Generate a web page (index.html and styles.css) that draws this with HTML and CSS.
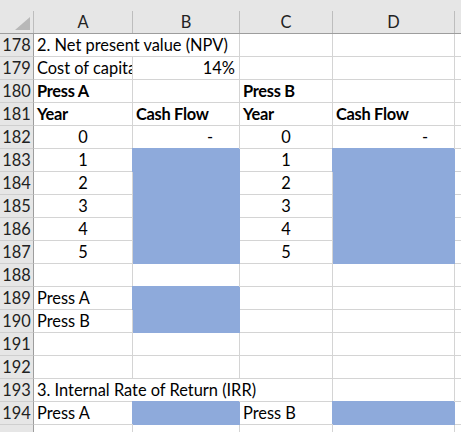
FILE: index.html
```html
<!DOCTYPE html>
<html>
<head>
<meta charset="utf-8">
<link rel="stylesheet" href="styles.css">
</head>
<body>
<div class="sheet">
  <div class="corner"><div class="hl"><svg class="tri" width="33" height="22" viewBox="0 0 33 22"><polygon points="15,19 30,19 30,6" fill="#b8b8b8"/></svg></div></div>
  <div class="hdr"><div class="hl">A</div></div>
  <div class="hdr"><div class="hl">B</div></div>
  <div class="hdr"><div class="hl">C</div></div>
  <div class="hdr"><div class="hl">D</div></div>
  <div class="hdr"><div class="hl last"></div></div>

  <div class="rh">178</div><div class="c span2">2. Net present value (NPV)</div><div class="c"></div><div class="c"></div><div class="c e"></div>
  <div class="rh">179</div><div class="c clip">Cost of capital</div><div class="c r">14%</div><div class="c"></div><div class="c"></div><div class="c e"></div>
  <div class="rh">180</div><div class="c b">Press A</div><div class="c"></div><div class="c b">Press B</div><div class="c"></div><div class="c e"></div>
  <div class="rh">181</div><div class="c b">Year</div><div class="c b">Cash Flow</div><div class="c b">Year</div><div class="c b">Cash Flow</div><div class="c e"></div>
  <div class="rh">182</div><div class="c m">0</div><div class="c dash">-</div><div class="c m">0</div><div class="c dash">-</div><div class="c e"></div>
  <div class="rh">183</div><div class="c m">1</div><div class="c fill rows5"></div><div class="c m">1</div><div class="c fill rows5"></div><div class="c e"></div>
  <div class="rh">184</div><div class="c m">2</div><div class="c m">2</div><div class="c e"></div>
  <div class="rh">185</div><div class="c m">3</div><div class="c m">3</div><div class="c e"></div>
  <div class="rh">186</div><div class="c m">4</div><div class="c m">4</div><div class="c e"></div>
  <div class="rh">187</div><div class="c m">5</div><div class="c m">5</div><div class="c e"></div>
  <div class="rh">188</div><div class="c"></div><div class="c"></div><div class="c"></div><div class="c"></div><div class="c e"></div>
  <div class="rh">189</div><div class="c">Press A</div><div class="c fill rows2"></div><div class="c"></div><div class="c"></div><div class="c e"></div>
  <div class="rh">190</div><div class="c">Press B</div><div class="c"></div><div class="c"></div><div class="c e"></div>
  <div class="rh">191</div><div class="c"></div><div class="c"></div><div class="c"></div><div class="c"></div><div class="c e"></div>
  <div class="rh">192</div><div class="c"></div><div class="c"></div><div class="c"></div><div class="c"></div><div class="c e"></div>
  <div class="rh">193</div><div class="c span3">3. Internal Rate of Return (IRR)</div><div class="c"></div><div class="c e"></div>
  <div class="rh">194</div><div class="c">Press A</div><div class="c fill"></div><div class="c">Press B</div><div class="c fill"></div><div class="c e"></div>
  <div class="rh"></div><div class="c"></div><div class="c"></div><div class="c"></div><div class="c"></div><div class="c e"></div>
</div>
</body>
</html>
```
FILE: styles.css
```css
html, body {
  margin: 0;
  padding: 0;
  background: #ffffff;
  overflow: hidden;
}
.sheet {
  width: 461px;
  height: 432px;
  overflow: hidden;
  display: grid;
  grid-template-columns: 34px 99px 107px 93px 122px 1fr;
  grid-auto-rows: 23px;
  grid-template-rows: 34px;
  font-family: Lato, "Liberation Sans", sans-serif;
  font-size: 16.4px;
  color: #000;
}
.corner, .hdr {
  background: #e6e6e6;
  border-bottom: 1px solid #9d9d9d;
  padding-top: 11px;
  box-sizing: border-box;
}
.hl {
  height: 22px;
  border-right: 1px solid #bdbdbd;
  box-sizing: border-box;
  display: flex;
  align-items: center;
  justify-content: center;
  color: #222;
  line-height: 22px;
}
.hl.last { border-right: none; }
.corner .hl { position: relative; }
.tri { position: absolute; left: 0; top: 0; }
.rh {
  background: #e6e6e6;
  border-right: 1px solid #9d9d9d;
  border-bottom: 1px solid #cfcfcf;
  box-sizing: border-box;
  text-align: center;
  line-height: 22px;
  color: #222;
}
.c {
  border-right: 1px solid #d4d4d4;
  border-bottom: 1px solid #d4d4d4;
  box-sizing: border-box;
  padding: 0 3px;
  line-height: 22px;
  white-space: nowrap;
  overflow: hidden;
}
.c.e { border-right: none; }
.span2 { grid-column: span 2; }
.span3 { grid-column: span 3; }
.b { font-weight: 700; letter-spacing: -0.3px; }
.m { text-align: center; padding: 0; }
.r { text-align: right; padding-right: 4px; }
.dash { text-align: right; padding-right: 26px; }
.fill {
  background: #8eaadb;
  border-color: #8eaadb;
  box-shadow: -1px -1px 0 #8eaadb;
}
.rows5 { grid-row: span 5; }
.rows2 { grid-row: span 2; }
```
